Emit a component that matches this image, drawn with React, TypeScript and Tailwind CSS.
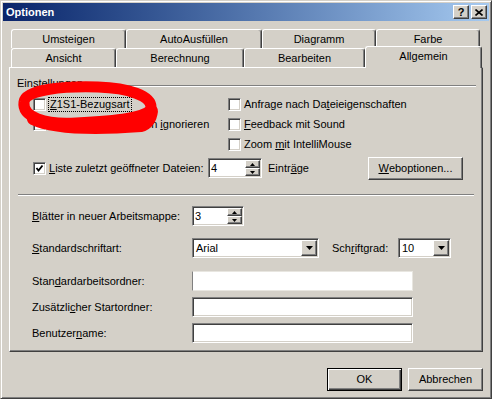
import React from "react";

const sunken =
  "border border-t-[#808080] border-l-[#808080] border-b-white border-r-white shadow-[inset_1px_1px_0_#404040,inset_-1px_-1px_0_#d4d0c8]";
const raised =
  "border border-t-white border-l-white border-b-[#404040] border-r-[#404040] shadow-[inset_-1px_-1px_0_#808080]";

function U({ children }: { children: React.ReactNode }) {
  return <span className="underline underline-offset-[1px]">{children}</span>;
}

function Box({ checked }: { checked?: boolean }) {
  return (
    <div className={`w-[13px] h-[13px] bg-white shrink-0 flex items-center justify-center ${sunken}`}>
      {checked && (
        <svg width="9" height="9" viewBox="0 0 9 9">
          <path d="M1.5 4 L3.5 6.5 L7.5 1.5" stroke="#000" strokeWidth="1.8" fill="none" />
        </svg>
      )}
    </div>
  );
}

function Check({ checked, children }: { checked?: boolean; children: React.ReactNode }) {
  return (
    <div className="flex items-center h-[20px]">
      <Box checked={checked} />
      <span className="ml-[3px] whitespace-nowrap">{children}</span>
    </div>
  );
}

function Tab({ w, children, active }: { w: string; children: React.ReactNode; active?: boolean }) {
  return (
    <div
      className={`${w} flex items-center justify-center rounded-t-[3px] bg-[#d4d0c8] border-l border-t border-l-white border-t-white border-r border-r-[#404040] shadow-[inset_-1px_0_0_#808080] ${
        active ? "h-[22px] relative z-10 pb-[2px]" : "h-[19px]"
      }`}
    >
      {children}
    </div>
  );
}

function Spin({ w, value }: { w: string; value: string }) {
  return (
    <div className={`${w} h-[20px] bg-white flex ${sunken}`}>
      <div className="flex-1 pl-[2px] pt-[1px] leading-[16px]">{value}</div>
      <div className="w-[16px] flex flex-col p-[1px] pl-0">
        <div className={`flex-1 bg-[#d4d0c8] flex items-center justify-center ${raised}`}>
          <svg width="5" height="3" viewBox="0 0 5 3">
            <path d="M2.5 0 L5 3 L0 3 Z" fill="#000" />
          </svg>
        </div>
        <div className={`flex-1 bg-[#d4d0c8] flex items-center justify-center ${raised}`}>
          <svg width="5" height="3" viewBox="0 0 5 3">
            <path d="M0 0 L5 0 L2.5 3 Z" fill="#000" />
          </svg>
        </div>
      </div>
    </div>
  );
}

function Combo({ w, value }: { w: string; value: string }) {
  return (
    <div className={`${w} h-[20px] bg-white flex ${sunken}`}>
      <div className="flex-1 pl-[3px] leading-[16px] pt-[1px]">{value}</div>
      <div className={`w-[16px] my-[1px] mr-[1px] bg-[#d4d0c8] flex items-center justify-center ${raised}`}>
        <svg width="7" height="4" viewBox="0 0 7 4">
          <path d="M0 0 L7 0 L3.5 4 Z" fill="#000" />
        </svg>
      </div>
    </div>
  );
}

function Field({ faint }: { faint?: boolean }) {
  return (
    <div
      className={`w-[221px] h-[20px] bg-white ${
        faint ? "border border-[#e8e6e0] border-l-[#808080]" : sunken
      }`}
    />
  );
}

function Btn({ w, children, def }: { w: string; children: React.ReactNode; def?: boolean }) {
  return (
    <div
      className={`${w} h-[23px] flex items-center justify-center bg-[#d4d0c8] ${
        def
          ? "border border-black shadow-[inset_1px_1px_0_#fff,inset_-1px_-1px_0_#404040,inset_-2px_-2px_0_#808080]"
          : raised
      }`}
    >
      {children}
    </div>
  );
}

export default function App() {
  return (
    <div className="relative w-[492px] h-[399px] bg-[#d4d0c8] border border-t-[#d4d0c8] border-l-[#d4d0c8] border-r-[#404040] border-b-[#404040] shadow-[inset_1px_1px_0_#fff,inset_-1px_-1px_0_#808080] p-[2px] font-['Liberation_Sans',Arial,sans-serif] text-[11px] text-black overflow-hidden">
      {/* title bar */}
      <div className="h-[18px] flex items-center bg-linear-to-r from-[#0a246a] to-[#a6caf0]">
        <span className="pl-[3px] font-bold text-white text-[11px]">Optionen</span>
        <div className="ml-auto flex gap-[2px] mr-[2px]">
          <div className={`w-[16px] h-[14px] bg-[#d4d0c8] flex items-center justify-center font-bold text-[11px] leading-none ${raised}`}>
            ?
          </div>
          <div className={`w-[16px] h-[14px] bg-[#d4d0c8] flex items-center justify-center ${raised}`}>
            <svg width="8" height="7" viewBox="0 0 8 7">
              <path d="M0.5 0.5 L7.5 6.5 M7.5 0.5 L0.5 6.5" stroke="#000" strokeWidth="1.6" />
            </svg>
          </div>
        </div>
      </div>

      {/* tabs */}
      <div className="mt-[8px] pl-[8px] flex">
        <Tab w="w-[115px]">Umsteigen</Tab>
        <Tab w="w-[136px]">AutoAusfüllen</Tab>
        <Tab w="w-[114px]">Diagramm</Tab>
        <Tab w="w-[104px]">Farbe</Tab>
      </div>
      <div className="-mt-[2px] pl-[8px] flex items-start h-[22px]">
        <div className="mt-[2px] flex">
          <Tab w="w-[105px]">Ansicht</Tab>
          <Tab w="w-[128px]">Berechnung</Tab>
          <Tab w="w-[121px]">Bearbeiten</Tab>
        </div>
        <Tab w="w-[117px]" active>
          Allgemein
        </Tab>
      </div>

      {/* panel */}
      <div className="relative -mt-[1px] ml-[6px] w-[474px] h-[285px] border border-t-white border-l-white border-r-[#404040] border-b-[#404040] shadow-[inset_-1px_-1px_0_#808080] flex flex-col">
        <div className="mt-[8px] h-[14px] flex">
          <span className="pl-[7px] pr-[3px] leading-[14px]">Einstellungen</span>
          <div className="flex-1 mt-[9px] mr-[6px] h-[2px] border-t border-t-[#808080] border-b border-b-white" />
        </div>

        <div className="mt-[4px] flex pl-[23px]">
          <div className="w-[195px] flex flex-col">
            <div className="flex items-center h-[20px]">
              <Box />
              <span className="ml-[2px] px-[1px] border border-dotted border-black leading-[13px] whitespace-nowrap">
                <U>Z</U>1S1-Bezugsart
              </span>
            </div>
            <Check>
              Andere Anwendungen <U>i</U>gnorieren
            </Check>
          </div>
          <div className="flex flex-col">
            <Check>
              Anfrage nach Da<U>t</U>eieigenschaften
            </Check>
            <Check>
              <U>F</U>eedback mit Sound
            </Check>
            <Check>
              Zoom <U>m</U>it IntelliMouse
            </Check>
          </div>
        </div>

        <div className="mt-[3px] h-[22px] flex items-center pl-[23px] pr-[19px]">
          <div className="w-[175px]">
            <Check checked>
              <U>L</U>iste zuletzt geöffneter Dateien:
            </Check>
          </div>
          <Spin w="w-[54px]" value="4" />
          <span className="ml-[6px]">
            Eintr<U>ä</U>ge
          </span>
          <div className="ml-auto">
            <Btn w="w-[95px]">
              <U>W</U>eboptionen...
            </Btn>
          </div>
        </div>

        <div className="mt-[15px] ml-[8px] mr-[8px] h-[2px] border-t border-t-[#808080] border-b border-b-white" />

        <div className="mt-[10px] h-[20px] flex items-center pl-[22px]">
          <span className="w-[160px]">
            <U>B</U>lätter in neuer Arbeitsmappe:
          </span>
          <Spin w="w-[52px]" value="3" />
        </div>

        <div className="mt-[12px] h-[20px] flex items-center pl-[22px]">
          <span className="w-[160px]">
            <U>S</U>tandardschriftart:
          </span>
          <Combo w="w-[127px]" value="Arial" />
          <span className="ml-[13px] w-[66px]">
            Sch<U>r</U>iftgrad:
          </span>
          <Combo w="w-[53px]" value="10" />
        </div>

        <div className="mt-[13px] h-[20px] flex items-center pl-[22px]">
          <span className="w-[160px]">
            Stan<U>d</U>ardarbeitsordner:
          </span>
          <Field faint />
        </div>

        <div className="mt-[6px] h-[20px] flex items-center pl-[22px]">
          <span className="w-[160px]">
            Zusätzli<U>c</U>her Startordner:
          </span>
          <Field />
        </div>

        <div className="mt-[6px] h-[20px] flex items-center pl-[22px]">
          <span className="w-[160px]">
            Benutzer<U>n</U>ame:
          </span>
          <Field />
        </div>
      </div>

      {/* bottom buttons */}
      <div className="mt-[16px] flex justify-end gap-[6px] mr-[6px]">
        <Btn w="w-[75px]" def>
          OK
        </Btn>
        <Btn w="w-[75px]">Abbrechen</Btn>
      </div>

      {/* red marker scribble */}
      <svg className="absolute left-0 top-0 pointer-events-none" width="492" height="399" viewBox="0 0 492 399">
        <path
          d="M23 101 C24 88, 65 85, 97 86 C128 87, 150 95, 150 106 C150 117, 112 120, 75 122 C44 124, 21 116, 23 101 Z"
          stroke="#ff0000"
          strokeWidth="11"
          fill="none"
          strokeLinecap="round"
        />
        <path
          d="M32 118 C55 129, 100 128, 140 125 C146 124, 150 118, 151 110"
          stroke="#ff0000"
          strokeWidth="12"
          fill="none"
          strokeLinecap="round"
        />
      </svg>
    </div>
  );
}
